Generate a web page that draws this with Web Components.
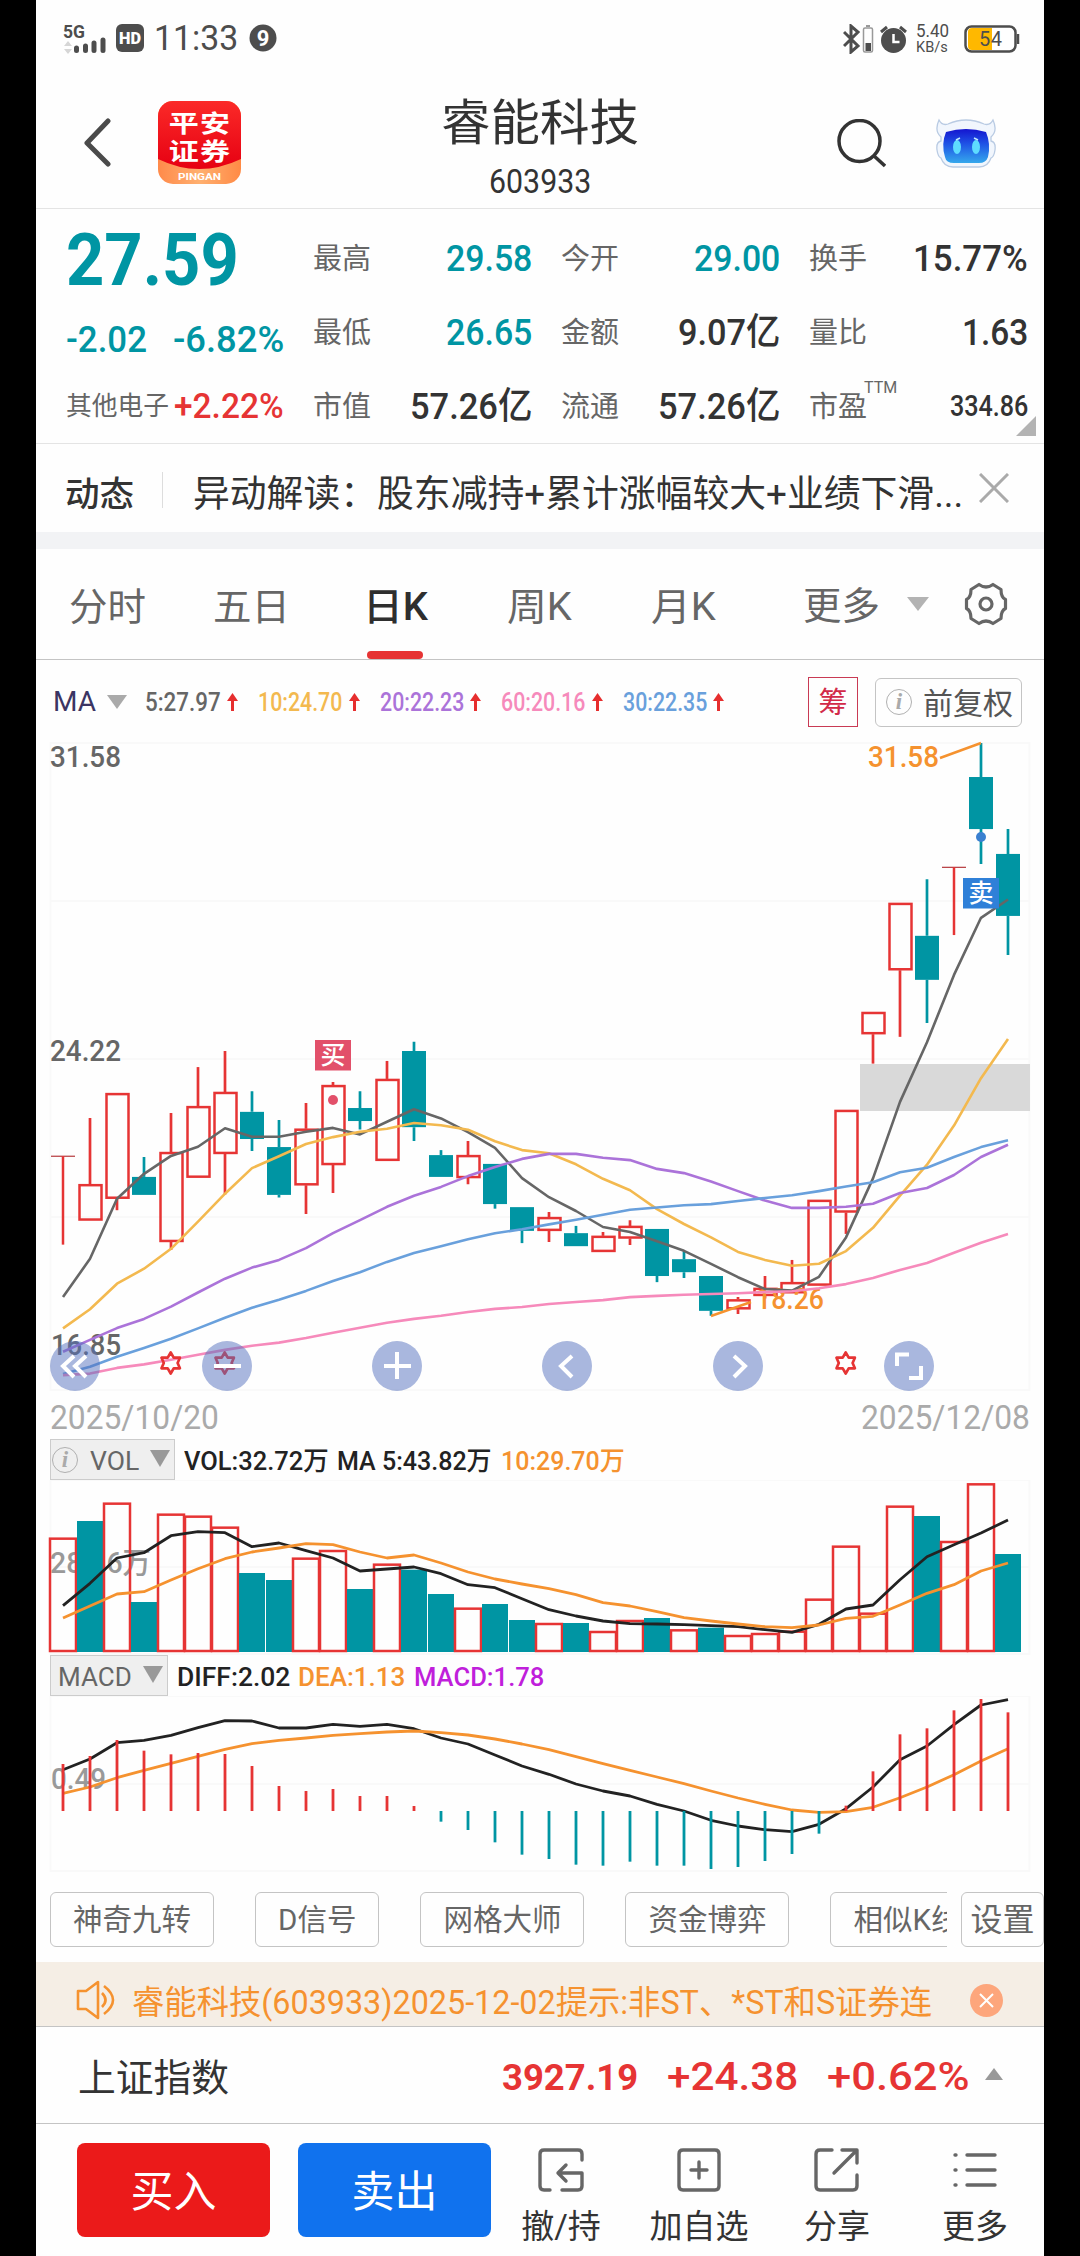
<!DOCTYPE html>
<html lang="zh-CN">
<head>
<meta charset="utf-8">
<title>睿能科技 603933</title>
<style>
	body {
		margin: 0;
		background: #000;
	}
</style>
</head>
<body>
<stock-screen></stock-screen>

<script>
function html(strings, ...values) {
	return String.raw({ raw: strings }, ...values)
}

function render(el, content) {
	el.attachShadow({ mode: 'open' }).innerHTML = content
}

const RED = '#e63434'
const TEAL = '#0095a3'
const ORANGE = '#f5922f'


/**
 * System status bar
 */
class StatusBar extends HTMLElement {
	connectedCallback() {
		render(this, html`
			<style>
				:host { display: flex; height: 76px; align-items: center; justify-content: space-between; padding: 0 24px 0 27px; box-sizing: border-box; color: #4d4d4d; }
				div { display: flex; align-items: center; }
				svg { display: block; flex: none; }
				.clock { font-size: 35px; margin: 0 11px 0 9px; }
				.right { margin-top: 1px; }
				.rate { display: flex; flex-direction: column; align-items: flex-start; margin: 0 15px 0 9px; }
				.rate fit-text { line-height: 17px; font-size: 18px; }
				.rate fit-text + fit-text { font-size: 15px; }
			</style>
			<div>
				<svg width="82" height="34" viewBox="0 0 82 34">
					<text x="0" y="17" font-size="19" font-weight="700" textLength="22" lengthAdjust="spacingAndGlyphs" fill="#4d4d4d">5G</text>
					<path d="M1 25l4-5 4 5zM1 28l4 5 4-5z" fill="#d6d6d6"/>
					<path d="M13.500 27v2.500M22.500 25v4.500M31 22v7.500M40 19v10.500" stroke="#4d4d4d" stroke-width="5" stroke-linecap="round"/>
					<rect x="53" y="3" width="28" height="28" rx="6" fill="#4d4d4d"/>
					<text x="56" y="23" font-size="16" font-weight="900" textLength="22" lengthAdjust="spacingAndGlyphs" fill="#fff">HD</text>
				</svg>
				<fit-text class="clock" w="84">11:33</fit-text>
				<svg width="28" height="28" viewBox="0 0 28 28"><circle cx="14" cy="14" r="13.500" fill="#4d4d4d"/><text x="14" y="21.500" text-anchor="middle" font-size="22" font-weight="700" fill="#fff">9</text></svg>
			</div>
			<div class="right">
				<svg width="64" height="30" viewBox="0 0 64 30">
					<path d="M1 8l14 14-7 6V2l7 6L1 22" fill="none" stroke="#4d4d4d" stroke-width="3"/>
					<rect x="20.500" y="4" width="9" height="24" rx="1.500" fill="none" stroke="#999" stroke-width="1.500"/>
					<path d="M23 2h4" stroke="#999" stroke-width="2"/>
					<rect x="22.500" y="19" width="5.500" height="8" fill="#4d4d4d"/>
					<circle cx="50.500" cy="16.500" r="12.500" fill="#4d4d4d"/>
					<path d="M38 8l6-5M63 8l-6-5" stroke="#4d4d4d" stroke-width="3"/>
					<path d="M50.500 10v8h6" fill="none" stroke="#fff" stroke-width="2.500"/>
				</svg>
				<div class="rate"><fit-text w="33">5.40</fit-text><fit-text w="32">KB/s</fit-text></div>
				<svg width="56" height="28" viewBox="0 0 56 28">
					<rect x="1.500" y="1.500" width="50" height="25" rx="6" fill="#fff" stroke="#4d4d4d" stroke-width="2.500"/>
					<path d="M4 7q0-4 4-4h20v22H8q-4 0-4-4z" fill="#ffb800"/>
					<path d="M54 9v10" stroke="#4d4d4d" stroke-width="2.500"/>
					<text x="26.500" y="21" text-anchor="middle" font-size="20" textLength="23" fill="#4d4d4d">54</text>
				</svg>
			</div>
		`)
	}
}


/**
 * Back, broker logo, stock name, search and assistant
 */
class StockHeader extends HTMLElement {
	connectedCallback() {
		render(this, html`
			<style>
				:host { display: grid; grid-template-columns: 1fr auto 1fr; height: 133px; border-bottom: 1px solid #e4e4e4; box-sizing: border-box; padding: 0 48px; color: #333; }
				div { display: flex; }
				.left { align-items: flex-start; padding-top: 25px; }
				.left svg:first-child { margin: 16px 45px 0 0; }
				.name { flex-direction: column; align-items: center; }
				.name fit-text { font-size: 49px; margin-top: 23px; }
				.name fit-text + fit-text { font-size: 33px; margin-top: 17px; }
				.right { justify-content: flex-end; align-items: flex-start; padding-top: 42px; }
				.right svg:first-child { margin: 1px 50px 0 0; }
			</style>
			<div class="left">
				<svg width="29" height="52" viewBox="0 0 29 52"><path d="M24 4L3 26l21 21" fill="none" stroke="#4a4a4a" stroke-width="5" stroke-linecap="round" stroke-linejoin="round"/></svg>
				<svg width="83" height="83" viewBox="0 0 83 83">
					<defs>
						<clipPath id="round"><rect width="83" height="83" rx="15"/></clipPath>
						<linearGradient id="gold"><stop stop-color="#ff8a4a"/><stop offset=".5" stop-color="#ffb070"/><stop offset="1" stop-color="#ff8a45"/></linearGradient>
						<linearGradient id="red" x2="0" y2="1"><stop stop-color="#fb2a28"/><stop offset="1" stop-color="#e60012"/></linearGradient>
					</defs>
					<g clip-path="url(#round)">
						<rect width="83" height="83" fill="url(#gold)"/>
						<path d="M0 0h83v58Q41 78 0 58z" fill="url(#red)"/>
						<g fill="#fff" text-anchor="middle" font-weight="700">
							<g transform="scale(1.250 1)">
								<text x="33.200" y="31.500" font-size="24" textLength="49">平安</text>
								<text x="33.200" y="59.500" font-size="24" textLength="49">证券</text>
							</g>
							<text x="41.500" y="79" font-size="9" textLength="43" lengthAdjust="spacingAndGlyphs">PINGAN</text>
						</g>
					</g>
				</svg>
			</div>
			<div class="name"><fit-text w="198">睿能科技</fit-text><fit-text w="102">603933</fit-text></div>
			<div class="right">
				<svg width="50" height="50" viewBox="0 0 50 50"><g fill="none" stroke="#333" stroke-width="3.500"><circle cx="23.500" cy="22" r="20.500"/><path d="M37 36l12 11"/></g></svg>
				<svg width="60" height="50" viewBox="0 0 60 50">
					<defs><linearGradient id="face" x2="0" y2="1"><stop stop-color="#1414cf"/><stop offset=".45" stop-color="#1f55e6"/><stop offset="1" stop-color="#35a8ec"/></linearGradient></defs>
					<path d="M3 2q3 6 9 4q18-8 36 0q6 2 9-4q5 11-2 17v4q5 1 4 9q-1 7-4 8q-3 9-12 9H17q-9 0-12-9q-3-1-4-8q-1-8 4-9v-4q-7-6-2-17z" fill="#f1f6fd" stroke="#b9cbe3" stroke-width="1.300"/>
					<path d="M10 14q20-6 40 0q5 12 2 25q-2 6-9 6H18q-8 0-9-6q-4-13 1-25z" fill="url(#face)"/>
					<ellipse cx="21" cy="29" rx="4" ry="7" fill="#5edcff"/><ellipse cx="40" cy="29" rx="4" ry="7" fill="#5edcff"/>
					<path d="M20 22l4-2M38 20l4 2" stroke="#bfe8ff" stroke-width="1.500"/>
				</svg>
			</div>
		`)
	}
}


/**
 * One label / value pair of the quote table
 */
class QuoteCell extends HTMLElement {
	connectedCallback() {
		render(this, html`
			<style>
				:host { display: flex; justify-content: space-between; align-items: center; height: 74px; color: #333; font-size: 37px; font-weight: 500; }
				.label { position: relative; margin-top: 2px; font-size: 29px; font-weight: 400; color: #666; }
				.sup { position: absolute; left: 55px; top: -13px; font-size: 16px; }
			</style>
			<div class="label">${this.getAttribute('label')}<span class="sup"><slot name="sup"></slot></span></div>
			<slot></slot>
		`)
	}
}


class QuotePanel extends HTMLElement {
	connectedCallback() {
		render(this, html`
			<style>
				:host { position: relative; display: grid; grid-template-columns: 218px repeat(3, 219px); column-gap: 29px; height: 235px; box-sizing: border-box; border-bottom: 1px solid #e4e4e4; padding-left: 30px; }
				.column { padding-top: 12px; }
				.row { display: flex; align-items: center; justify-content: space-between; height: 54px; font-size: 37px; font-weight: 500; color: ${TEAL}; }
				.price { height: 103px; font-size: 73px; font-weight: 700; }
				.sector { height: 80px; font-size: 35px; color: ${RED}; }
				.sector fit-text:first-child { font-size: 26px; font-weight: 400; color: #666; }
				.teal { color: ${TEAL}; }
				.small { font-size: 29px; }
				.corner { position: absolute; right: 8px; bottom: 7px; }
			</style>
			<div>
				<div class="row price"><fit-text w="173">27.59</fit-text></div>
				<div class="row"><fit-text w="81">-2.02</fit-text><fit-text w="111">-6.82%</fit-text></div>
				<div class="row sector"><fit-text w="103">其他电子</fit-text><fit-text w="110">+2.22%</fit-text></div>
			</div>
			<div class="column">
				<quote-cell label="最高"><fit-text class="teal" w="86">29.58</fit-text></quote-cell>
				<quote-cell label="最低"><fit-text class="teal" w="86">26.65</fit-text></quote-cell>
				<quote-cell label="市值"><fit-text w="122">57.26亿</fit-text></quote-cell>
			</div>
			<div class="column">
				<quote-cell label="今开"><fit-text class="teal" w="86">29.00</fit-text></quote-cell>
				<quote-cell label="金额"><fit-text w="102">9.07亿</fit-text></quote-cell>
				<quote-cell label="流通"><fit-text w="122">57.26亿</fit-text></quote-cell>
			</div>
			<div class="column">
				<quote-cell label="换手"><fit-text w="115">15.77%</fit-text></quote-cell>
				<quote-cell label="量比"><fit-text w="66">1.63</fit-text></quote-cell>
				<quote-cell label="市盈"><span slot="sup">TTM</span><fit-text class="small" w="78">334.86</fit-text></quote-cell>
			</div>
			<svg class="corner" width="20" height="20"><path d="M20 0v20H0z" fill="#b3b3b3"/></svg>
		`)
	}
}


class NewsStrip extends HTMLElement {
	connectedCallback() {
		render(this, html`
			<style>
				:host { display: flex; align-items: center; height: 105px; box-sizing: border-box; padding: 13px 35px 9px 29px; border-bottom: 17px solid #f2f3f5; color: #333; font-size: 37px; }
				b { font-size: 34.5px; font-weight: 500; padding-top: 8px; }
				fit-text { padding-top: 8px; }
				hr { width: 1px; height: 36px; border: 0; margin: 0 30px 0 28px; background: #ddd; }
				svg { margin: 0 0 4px auto; }
			</style>
			<b>动态</b>
			<hr>
			<fit-text w="770"><slot></slot></fit-text>
			<svg width="30" height="30"><path d="M1 1l28 28M29 1L1 29" stroke="#aaa" stroke-width="3"/></svg>
		`)
	}
}


/**
 * Period tabs with the chart settings at the end
 */
class PeriodTabs extends HTMLElement {
	connectedCallback() {
		render(this, html`
			<style>
				:host { display: flex; height: 111px; box-sizing: border-box; border-bottom: 1px solid #c4c4c4; color: #666; font-size: 38px; }
				.tab { width: 144px; display: grid; grid-template-rows: 1fr 8px; place-items: center; box-sizing: border-box; }
				.tab fit-text { margin: 14px 2px 0 0; }
				.active { color: #2e2e2e; font-weight: 500; }
				.active::after { content: ''; width: 56px; height: 8px; margin-right: 2px; border-radius: 4px; background: ${RED}; }
				.more { flex: 1; display: flex; align-items: center; padding: 0 36px 0 47px; }
				.more fit-text { padding-top: 4px; }
				.more svg:nth-of-type(1) { margin: 0 auto 0 27px; }
			</style>
			<div class="tab"><fit-text w="77">分时</fit-text></div>
			<div class="tab"><fit-text w="77">五日</fit-text></div>
			<div class="tab active"><fit-text w="65">日K</fit-text></div>
			<div class="tab"><fit-text w="65">周K</fit-text></div>
			<div class="tab"><fit-text w="65">月K</fit-text></div>
			<div class="more">
				<fit-text w="77">更多</fit-text>
				<svg width="22" height="14"><path d="M0 0h22L11 14z" fill="#b3b3b3"/></svg>
				<svg width="44" height="44" viewBox="0 0 44 44">
					<g fill="none" stroke="#666" stroke-width="3.200" stroke-linejoin="round">
						<path d="M15 2.500q7 5 14 0l8 5q0 8 4.500 10v9q-4.500 2-4.500 10l-8 5q-7-5-14 0l-8-5q0-8-4.500-10v-9q4.500-2 4.500-10z"/>
						<circle cx="22" cy="22" r="6"/>
					</g>
				</svg>
			</div>
		`)
	}
}


/**
 * Moving average value with its trend arrow
 */
class MaValue extends HTMLElement {
	connectedCallback() {
		render(this, html`
			<style>
				:host { display: flex; align-items: center; gap: 6px; font-size: 25px; font-weight: 500; }
			</style>
			<slot></slot>
			<svg width="11" height="18"><path d="M5.500 18V6" stroke="#e62e2e" stroke-width="3"/><path d="M0 8L5.500 0 11 8z" fill="#e62e2e"/></svg>
		`)
	}
}


class InfoIcon extends HTMLElement {
	connectedCallback() {
		render(this, html`
			<style>
				:host { display: block; width: 24px; height: 24px; border: 1.500px solid #b0b0b0; border-radius: 50%; text-align: center; font: italic 700 23px/23px "Liberation Serif", serif; color: #aaa; }
			</style>
			i
		`)
	}
}


class MaBar extends HTMLElement {
	connectedCallback() {
		render(this, html`
			<style>
				:host { display: flex; align-items: center; height: 80px; box-sizing: border-box; padding: 4px 22px 0 17px; }
				.select { font-size: 28px; color: #3b3563; }
				.triangle { margin: 0 18px 0 11px; }
				ma-value { margin-right: 20px; }
				.chips { margin-left: auto; width: 48px; height: 48px; border: 1px solid #c93a54; color: #d22a48; font-size: 29px; line-height: 50px; text-align: center; }
				.adjust { display: flex; align-items: center; justify-content: space-between; width: 147px; height: 49px; box-sizing: border-box; padding: 0 8px 0 10px; margin-left: 17px; border: 1px solid #c4c4c4; border-radius: 6px; color: #555; font-size: 30px; }
				.adjust fit-text { padding-top: 3px; }
			</style>
			<fit-text class="select" w="43">MA</fit-text>
			<svg class="triangle" width="20" height="14"><path d="M0 0h20L10 14z" fill="#aaa"/></svg>
			<ma-value style="color: #666"><fit-text w="76">5:27.97</fit-text></ma-value>
			<ma-value style="color: #f3b94f"><fit-text w="84.500">10:24.70</fit-text></ma-value>
			<ma-value style="color: #ab73d9"><fit-text w="84.500">20:22.23</fit-text></ma-value>
			<ma-value style="color: #f68abb"><fit-text w="84.500">60:20.16</fit-text></ma-value>
			<ma-value style="color: #69a0dc"><fit-text w="84.500">30:22.35</fit-text></ma-value>
			<div class="chips">筹</div>
			<div class="adjust"><info-icon></info-icon><fit-text w="90">前复权</fit-text></div>
		`)
	}
}


/* Charts: one slot of 27px a day, the first day is centred on x = 27 */
const dayX = i => 27 + 27 * i

function line(values, y, color, width = 2.6) {
	const points = values.map((v, i) => `${dayX(i)},${y(v).toFixed(1)}`).join(' ')
	return `<polyline points="${points}" fill="none" stroke="${color}" stroke-width="${width}" stroke-linejoin="round"/>`
}

function frame(top, bottom, ...grid) {
	return `<g fill="none" stroke="#f9f9f9" stroke-width="2">
		<rect x="14.500" y="${top}" width="979" height="${bottom - top}"/>
		${grid.map(y => `<path d="M14 ${y}H994"/>`).join('')}
	</g>`
}

function label(text, x, y, width, color = '#666', size = 30) {
	return `<text x="${x}" y="${y}" textLength="${width}" lengthAdjust="spacingAndGlyphs" font-size="${size}" font-weight="500" fill="${color}">${text}</text>`
}


/**
 * Daily candles with MA lines
 */
class CandleChart extends HTMLElement {
	connectedCallback() {
		const y = v => v * 0.38267 - 20

		// [rising, high, body top, body bottom, low]
		const candles = [
			[1, 1140, 1140, 1140, 1371], [1, 1040, 1213, 1308, 1308], [1, 975, 975, 1251, 1281], [0, 1142, 1194, 1241, 1241],
			[1, 1027, 1129, 1364, 1385], [1, 907, 1009, 1196, 1196], [1, 865, 972, 1134, 1240], [0, 970, 1024, 1095, 1126],
			[0, 1045, 1116, 1241, 1248], [1, 1001, 1068, 1216, 1291], [1, 946, 954, 1163, 1236], [0, 970, 1014, 1048, 1070],
			[1, 891, 938, 1152, 1152], [0, 841, 865, 1064, 1100], [0, 1124, 1137, 1194, 1194], [1, 1100, 1137, 1197, 1213],
			[0, 1160, 1160, 1265, 1277], [0, 1273, 1273, 1335, 1367], [1, 1286, 1299, 1335, 1364], [0, 1322, 1341, 1375, 1375],
			[1, 1338, 1348, 1390, 1390], [1, 1307, 1322, 1355, 1372], [0, 1330, 1330, 1453, 1469], [0, 1388, 1409, 1443, 1458],
			[0, 1453, 1453, 1544, 1557], [1, 1508, 1514, 1540, 1552], [1, 1453, 1484, 1505, 1512], [1, 1411, 1469, 1498, 1498],
			[1, 1254, 1254, 1478, 1478], [1, 1019, 1019, 1287, 1343], [1, 763, 763, 821, 898], [1, 478, 478, 654, 828],
			[0, 416, 564, 679, 792], [1, 385, 385, 385, 562], [0, 60, 149, 285, 376], [0, 285, 350, 512, 614],
		]
		const ma5 = [1508, 1408, 1251, 1186, 1139, 1115, 1067, 1089, 1089, 1076, 1066, 1083, 1050, 1017, 1041, 1077, 1118, 1197, 1247, 1283, 1325, 1338, 1362, 1387, 1421, 1456, 1487, 1491, 1455, 1352, 1198, 998, 842, 666, 517, 469]
		const ma10 = [1590, 1540, 1473, 1434, 1382, 1311, 1238, 1171, 1140, 1108, 1090, 1076, 1068, 1053, 1059, 1071, 1101, 1124, 1132, 1161, 1199, 1229, 1278, 1317, 1352, 1390, 1411, 1426, 1421, 1388, 1327, 1243, 1162, 1060, 936, 834]
		const ma20 = [1651, 1620, 1589, 1565, 1533, 1496, 1460, 1431, 1411, 1380, 1341, 1307, 1272, 1243, 1220, 1192, 1168, 1147, 1134, 1134, 1144, 1150, 1173, 1184, 1206, 1231, 1256, 1275, 1275, 1272, 1264, 1236, 1223, 1189, 1142, 1110]
		const ma30 = [1709, 1690, 1664, 1641, 1617, 1590, 1562, 1536, 1515, 1492, 1466, 1443, 1416, 1393, 1375, 1357, 1341, 1331, 1318, 1306, 1293, 1280, 1274, 1268, 1265, 1257, 1249, 1242, 1231, 1219, 1208, 1182, 1170, 1142, 1116, 1098]
		const ma60 = [1712, 1708, 1693, 1684, 1672, 1659, 1646, 1635, 1627, 1615, 1601, 1588, 1575, 1565, 1557, 1547, 1539, 1534, 1526, 1521, 1516, 1508, 1505, 1502, 1500, 1498, 1495, 1493, 1485, 1474, 1458, 1437, 1419, 1392, 1366, 1343]

		const drawn = candles.map(([rising, high, top, bottom, low], i) => {
			const x = dayX(i)
			if (top === bottom) {
				return `<path d="M${x - 12} ${y(top)}h24" stroke="#b5383c" stroke-width="1.200"/><path d="M${x} ${y(top)}V${y(low)}" stroke="${RED}" stroke-width="2.500"/>`
			}
			const body = rising
				? `<rect x="${x - 10.5}" y="${y(top) + 1}" width="22" height="${y(bottom) - y(top) - 2}" fill="none" stroke="${RED}" stroke-width="2.500"/>`
				: `<rect x="${x - 12}" y="${y(top)}" width="24" height="${y(bottom) - y(top)}" fill="${TEAL}"/>`
			return `<path d="M${x} ${y(high)}V${y(top)}M${x} ${y(bottom)}V${y(low)}" stroke="${rising ? RED : TEAL}" stroke-width="2.700"/>${body}`
		}).join('')

		const star = (x, y) => `<path d="M${x} ${y - 11}l3 5.200h6.200l-2.300 5.300 2.300 5.300h-6.200l-3 5.200-3-5.200h-6.200l2.300-5.300-2.300-5.300h6.200z" fill="none" stroke="${RED}" stroke-width="2.700" stroke-linejoin="round"/>`
		const mark = (text, x, y, color) => `<rect x="${x}" y="${y}" width="36" height="30.500" fill="${color}"/><text x="${x + 18}" y="${y + 24}" text-anchor="middle" font-size="25" font-weight="500" fill="#fff">${text}</text>`
		const control = (x, icon) => `<g transform="translate(${x} 626)" fill="none" stroke="#fff" stroke-width="4"><circle r="25" fill="#5470be" fill-opacity=".5" stroke="none"/><path d="${icon}"/></g>`

		render(this, html`
			<style>:host, svg { display: block; }</style>
			<svg width="1008" height="654">
				${frame(3, 650, 161, 319, 477)}
				${label('31.58', 14, 27, 71)}
				${label('24.22', 14, 321, 71)}
				${label('16.85', 15, 615, 70)}
				<rect x="824" y="324" width="170" height="47" fill="#d9d9d9"/>
				${drawn}
				${label('18.26', 720, 569, 68, ORANGE)}
				${line(ma5, y, '#666')}
				${line(ma10, y, '#f3b94f')}
				${line(ma20, y, '#ab73d9')}
				${line(ma30, y, '#69a0dc')}
				${line(ma60, y, '#f68abb')}
				${label('31.58', 832, 27, 71, ORANGE)}
				<path d="M904 18l41-15M675 576l40-14" stroke="${ORANGE}" stroke-width="2.500"/>
				${mark('买', 279, 300, '#e2506a')}
				<circle cx="297" cy="360" r="5" fill="#e2506a"/>
				${mark('卖', 927, 138, '#2f80d8')}
				<circle cx="945" cy="97" r="5" fill="#3a80d0"/>
				${star(134.7, 623.5)}${star(188.7, 623.5)}${star(809.7, 623.5)}
				${control(39, 'M-1-10L-12 0-1 11M11-10L0 0 11 11')}
				${control(191, 'M-13 0H14')}
				${control(361, 'M-13 0H14M0-14V13')}
				${control(531, 'M5-10L-6 0 5 11')}
				${control(702, 'M-4-10L7 0-4 11')}
				${control(873, 'M-12 0V-11.500H0M0 12H12V0')}
			</svg>
		`)
	}
}


/**
 * Daily volume
 */
class VolumeChart extends HTMLElement {
	connectedCallback() {
		const y = v => v / 3 - 240
		const base = y(1236)
		const falling = [1, 3, 7, 8, 11, 13, 14, 16, 17, 19, 22, 24, 32, 35]
		const tops = [893, 843, 788, 1086, 821, 827, 860, 999, 1020, 953, 930, 1047, 971, 989, 1062, 1103, 1092, 1140, 1149, 1149, 1173, 1140, 1134, 1168, 1163, 1185, 1179, 1172, 1076, 917, 1118, 797, 828, 903, 730, 942]
		const ma5 = [1097, 1030, 954, 938, 887, 875, 878, 920, 909, 932, 954, 993, 987, 981, 1001, 1034, 1043, 1076, 1109, 1128, 1143, 1151, 1152, 1154, 1157, 1160, 1169, 1177, 1153, 1107, 1095, 1019, 950, 914, 879, 840]
		const ma10 = [1134, 1098, 1062, 1055, 1020, 986, 956, 936, 924, 911, 914, 936, 954, 945, 969, 996, 1017, 1032, 1046, 1064, 1088, 1098, 1115, 1133, 1143, 1152, 1160, 1163, 1155, 1135, 1129, 1095, 1060, 1034, 993, 969]

		const bars = tops.map((v, i) => falling.includes(i)
			? `<rect x="${dayX(i) - 13}" y="${y(v)}" width="26" height="${base - y(v)}" fill="${TEAL}"/>`
			: `<rect x="${dayX(i) - 13}" y="${y(v) + 1}" width="26" height="${base - y(v) - 2}" fill="none" stroke="${RED}" stroke-width="2.500"/>`
		).join('')

		render(this, html`
			<style>:host, svg { display: block; }</style>
			<svg width="1008" height="175">
				${frame(0, 174, 87)}
				${label('28.36万', 14, 93, 101, '#999')}
				${bars}
				${line(ma5, y, '#222', 2.800)}
				${line(ma10, y, ORANGE, 2.800)}
			</svg>
		`)
	}
}


/**
 * MACD histogram with DIFF and DEA
 */
class MacdChart extends HTMLElement {
	connectedCallback() {
		const y = v => v / 3 - 56
		const bars = [372, 348, 300, 332, 343, 339, 342, 378, 438, 453, 447, 468, 468, 498, 545, 570, 607, 644, 657, 674, 677, 665, 677, 677, 687, 681, 663, 642, 581, 497, 394, 283, 265, 211, 177, 217]
		const diff = [389, 357, 308, 301, 286, 263, 242, 243, 264, 264, 253, 259, 253, 266, 294, 312, 345, 378, 403, 432, 453, 468, 493, 513, 541, 558, 569, 575, 553, 506, 441, 359, 318, 254, 195, 179]
		const dea = [460, 441, 413, 391, 370, 349, 328, 311, 301, 294, 286, 281, 276, 273, 278, 285, 297, 312, 329, 350, 371, 391, 411, 431, 453, 474, 493, 510, 517, 515, 502, 473, 441, 404, 363, 326]

		render(this, html`
			<style>:host, svg { display: block; }</style>
			<svg width="1008" height="176">
				${frame(0, 175, 88)}
				${label('0.49', 15, 93, 55, '#999')}
				${line(diff, y, '#222', 2.800)}
				${line(dea, y, ORANGE, 2.800)}
				${bars.map((v, i) => `<path d="M${dayX(i)} 115V${y(v)}" stroke="${v < 513 ? RED : TEAL}" stroke-width="2.800"/>`).join('')}
			</svg>
		`)
	}
}


/**
 * Indicator picker followed by its current values
 */
class IndicatorHead extends HTMLElement {
	connectedCallback() {
		render(this, html`
			<style>
				:host { display: flex; align-items: center; gap: 8.500px; height: 41px; margin-left: 14px; font-size: 26px; font-weight: 500; color: #222; }
				.picker { display: flex; align-items: center; justify-content: space-between; width: ${this.getAttribute('width')}px; height: 41px; box-sizing: border-box; padding: 0 4px 0 ${this.getAttribute('pad')}px; background: #efefef; border: 1px solid #ccc; font-weight: 400; color: #666; }
				svg { margin-bottom: 3px; }
				slot:not([name])::slotted(*) { padding-top: 2px; }
				slot[name]::slotted(fit-text) { padding-top: 3px; }
			</style>
			<div class="picker"><slot name="name"></slot><svg width="20" height="17"><path d="M0 0h20L10 17z" fill="#999"/></svg></div>
			<slot></slot>
		`)
	}
}


class PillButton extends HTMLElement {
	connectedCallback() {
		render(this, html`
			<style>
				:host { display: block; flex: none; height: 55px; line-height: 55px; box-sizing: border-box; padding: 0 22px; border: 1px solid #c4c4c4; border-radius: 6px; font-size: 29.500px; color: #666; white-space: nowrap; text-align: center; }
			</style>
			<slot></slot>
		`)
	}
}


class IndicatorPills extends HTMLElement {
	connectedCallback() {
		render(this, html`
			<style>
				:host { display: flex; justify-content: space-between; height: 90px; box-sizing: border-box; padding: 20px 0 0 14px; }
				.scroll { display: flex; gap: 41px; width: 897px; overflow: hidden; }
				.set { width: 83px; padding: 0 8px; font-size: 32px; }
			</style>
			<div class="scroll"><slot></slot></div>
			<pill-button class="set">设置</pill-button>
		`)
	}
}


class NoticeBar extends HTMLElement {
	connectedCallback() {
		render(this, html`
			<style>
				:host { display: flex; align-items: center; height: 65px; box-sizing: border-box; padding: 12px 41px 0 40px; background: #f5eee5; border-bottom: 1px solid #c4c4c4; color: ${ORANGE}; font-size: 33px; }
				fit-text { margin: 0 auto 0 15px; padding-top: 4px; }
			</style>
			<svg width="41" height="40" viewBox="0 0 41 40">
				<g fill="none" stroke="${ORANGE}" stroke-width="2.600" stroke-linejoin="round">
					<path d="M2 11h8L22 2v36L10 29H2z"/>
					<path d="M26 13q7 7 0 14M28 6q18 14 0 28"/>
				</g>
			</svg>
			<fit-text w="800"><slot></slot></fit-text>
			<svg width="33" height="33"><circle cx="16.500" cy="16.500" r="16.500" fill="#fda67c"/><path d="M10 10l13 13M23 10L10 23" stroke="#fff" stroke-width="2"/></svg>
		`)
	}
}


class IndexBar extends HTMLElement {
	connectedCallback() {
		render(this, html`
			<style>
				:host { display: flex; align-items: center; height: 97px; box-sizing: border-box; padding: 5px 41px 0 42px; border-bottom: 1px solid #c4c4c4; color: ${RED}; font-size: 39px; font-weight: 500; }
				.name { font-size: 37.5px; font-weight: 400; color: #333; margin-right: auto; padding-top: 2px; }
				.last { font-size: 37px; font-weight: 700; }
				.change { margin: 0 29px; }
				svg { margin: 0 0 8px 15px; }
			</style>
			<fit-text class="name" w="151">上证指数</fit-text>
			<fit-text class="last" w="136">3927.19</fit-text>
			<fit-text class="change" w="131">+24.38</fit-text>
			<fit-text w="143">+0.62%</fit-text>
			<svg width="18" height="12"><path d="M0 12h18L9 0z" fill="#999"/></svg>
		`)
	}
}


class TradeButton extends HTMLElement {
	connectedCallback() {
		render(this, html`
			<style>
				:host { display: block; width: 193px; height: 94px; border-radius: 8px; background: var(--side); color: #fff; font-size: 43px; line-height: 98px; text-align: center; }
			</style>
			<slot></slot>
		`)
	}
}


class ToolItem extends HTMLElement {
	connectedCallback() {
		render(this, html`
			<style>
				:host { display: flex; flex-direction: column; align-items: center; gap: 17px; width: 138px; padding-top: 4px; font-size: 33px; color: #333; white-space: nowrap; }
				svg { fill: none; stroke: #666; stroke-width: 3.400; stroke-linecap: round; stroke-linejoin: round; }
			</style>
			<svg width="46" height="46" viewBox="0 0 46 46"><path d="${this.getAttribute('icon')}"/></svg>
			<slot></slot>
		`)
	}
}


class TradeBar extends HTMLElement {
	connectedCallback() {
		render(this, html`
			<style>
				:host { display: flex; height: 132px; box-sizing: border-box; padding: 19px 0 0 41px; }
				trade-button + trade-button { margin: 0 1px 0 28px; }
			</style>
			<trade-button style="--side: #eb1a1a">买入</trade-button>
			<trade-button style="--side: #1072ee">卖出</trade-button>
			<tool-item icon="M44 13V7q0-4-4-4H6Q2 3 2 7v32q0 4 4 4h6M24 43h16q4 0 4-4V26H20M28 18l-8 8 8 8">撤/持</tool-item>
			<tool-item icon="M7 3h32q4 0 4 4v32q0 4-4 4H7q-4 0-4-4V7q0-4 4-4zM23 15v16M15 23h16">加自选</tool-item>
			<tool-item icon="M18 3H6Q2 3 2 7v32q0 4 4 4h33q4 0 4-4V28M28 3h15v13M42 4L20 26">分享</tool-item>
			<tool-item icon="M3 8h1M3 23h1M3 38h1M15 8h28M15 23h28M15 38h28">更多</tool-item>
		`)
	}
}


/**
 * The whole page
 */
class StockScreen extends HTMLElement {
	connectedCallback() {
		render(this, html`
			<style>
				:host { display: block; width: 1008px; height: 2256px; margin: 0 auto; overflow: hidden; background: #fefefe; font-family: Roboto, "Noto Sans CJK SC", sans-serif; line-height: 1; }
				.dates { display: flex; align-items: center; justify-content: space-between; height: 45px; padding: 0 14px; font-size: 34px; color: #aaa; }
			</style>
			<status-bar></status-bar>
			<stock-header></stock-header>
			<quote-panel></quote-panel>
			<news-strip>异动解读：股东减持+累计涨幅较大+业绩下滑...</news-strip>
			<period-tabs></period-tabs>
			<ma-bar></ma-bar>
			<candle-chart></candle-chart>
			<div class="dates"><fit-text w="169">2025/10/20</fit-text><fit-text w="169">2025/12/08</fit-text></div>
			<indicator-head width="125" pad="1">
				<info-icon slot="name"></info-icon><fit-text slot="name" w="49">VOL</fit-text>
				<fit-text w="145">VOL:32.72万</fit-text>
				<fit-text w="155">MA 5:43.82万</fit-text>
				<fit-text w="124" style="color: ${ORANGE}">10:29.70万</fit-text>
			</indicator-head>
			<volume-chart></volume-chart>
			<indicator-head width="118" pad="7">
				<fit-text slot="name" w="74">MACD</fit-text>
				<fit-text w="113">DIFF:2.02</fit-text>
				<fit-text w="107" style="color: ${ORANGE}">DEA:1.13</fit-text>
				<fit-text w="130" style="color: #c01fdb">MACD:1.78</fit-text>
			</indicator-head>
			<macd-chart></macd-chart>
			<indicator-pills>
				<pill-button>神奇九转</pill-button>
				<pill-button>D信号</pill-button>
				<pill-button>网格大师</pill-button>
				<pill-button>资金博弈</pill-button>
				<pill-button>相似K线</pill-button>
			</indicator-pills>
			<notice-bar>睿能科技(603933)2025-12-02提示:非ST、*ST和S证券连</notice-bar>
			<index-bar></index-bar>
			<trade-bar></trade-bar>
		`)
	}
}


/**
 * Squeezes or stretches one line of text to the width in its "w" attribute
 */
class FitText extends HTMLElement {
	connectedCallback() {
		render(this, html`
			<style>
				:host { display: block; flex: none; white-space: nowrap; }
				span { display: inline-block; transform-origin: 0 50%; vertical-align: top; }
			</style>
			<span><slot></slot></span>
		`)
		const width = Number(this.getAttribute('w'))
		const span = this.shadowRoot.querySelector('span')
		this.style.width = width + 'px'
		span.style.transform = `scaleX(${width / span.offsetWidth})`
	}
}


customElements.define('status-bar', StatusBar)
customElements.define('stock-header', StockHeader)
customElements.define('quote-cell', QuoteCell)
customElements.define('quote-panel', QuotePanel)
customElements.define('news-strip', NewsStrip)
customElements.define('period-tabs', PeriodTabs)
customElements.define('ma-value', MaValue)
customElements.define('info-icon', InfoIcon)
customElements.define('ma-bar', MaBar)
customElements.define('candle-chart', CandleChart)
customElements.define('volume-chart', VolumeChart)
customElements.define('macd-chart', MacdChart)
customElements.define('indicator-head', IndicatorHead)
customElements.define('pill-button', PillButton)
customElements.define('indicator-pills', IndicatorPills)
customElements.define('notice-bar', NoticeBar)
customElements.define('index-bar', IndexBar)
customElements.define('trade-button', TradeButton)
customElements.define('tool-item', ToolItem)
customElements.define('trade-bar', TradeBar)
customElements.define('stock-screen', StockScreen)
// last, so that every inherited font is in place when it measures
customElements.define('fit-text', FitText)
</script>
</body>
</html>
